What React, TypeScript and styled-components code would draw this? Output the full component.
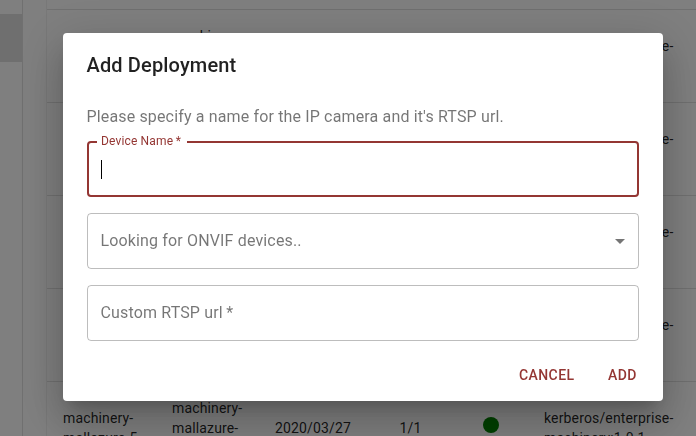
import React from "react";
import styled, { createGlobalStyle } from "styled-components";

const GlobalStyle = createGlobalStyle`
  *, *::before, *::after { box-sizing: border-box; }
  body {
    margin: 0;
    overflow: hidden;
    font-family: Roboto, "Liberation Sans", sans-serif;
    color: rgba(0, 0, 0, 0.87);
    -webkit-font-smoothing: antialiased;
  }
`;

const ACCENT = "#943633";

const Page = styled.div`
  display: flex;
  height: 100vh;
  overflow: hidden;
  background: #fff;
`;

const Sidebar = styled.nav`
  flex: none;
  width: 23px;
  padding-top: 14px;
  border-right: 1px solid #e0e0e0;
`;

const ActiveItem = styled.div`
  height: 48px;
  background: #dedede;
`;

const Main = styled.main`
  flex: 1;
  min-width: 0;
  padding-left: 23px;
`;

const Paper = styled.section`
  width: 760px;
  border-left: 1px solid #f0f0f0;
`;

const TableHead = styled.div`
  height: 10px;
  border-bottom: 1px solid #e0e0e0;
`;

const Row = styled.div`
  display: grid;
  grid-template-columns: 109px 103px 124.6px 83.4px 61px 1fr;
  align-items: center;
  height: 93px;
  border-bottom: 1px solid #e0e0e0;
`;

const Cell = styled.div`
  padding: 16px;
  font-size: 14px;
  line-height: 20px;
  letter-spacing: 0.01071em;
  white-space: pre-line;
`;

const StatusDot = styled.span`
  display: block;
  width: 16px;
  height: 16px;
  margin-top: -6px;
  border-radius: 50%;
  background: #008000;
`;

const Backdrop = styled.div`
  position: fixed;
  inset: 0;
  display: flex;
  align-items: flex-start;
  justify-content: center;
  padding: 33px 0 0 30px;
  background: rgba(0, 0, 0, 0.5);
`;

const Dialog = styled.div`
  width: 600px;
  height: 368px;
  border-radius: 4px;
  background: #fff;
  box-shadow: 0 11px 15px -7px rgba(0, 0, 0, 0.2),
    0 24px 38px 3px rgba(0, 0, 0, 0.14), 0 9px 46px 8px rgba(0, 0, 0, 0.12);
`;

const Title = styled.h2`
  margin: 0;
  padding: 16px 24px 16px 23.5px;
  font-size: 20px;
  font-weight: 500;
  line-height: 32px;
  letter-spacing: 0.0075em;
`;

const Content = styled.div`
  padding: 8px 24px;
`;

const Description = styled.p`
  margin: 0 0 12px -0.5px;
  font-size: 16px;
  line-height: 24px;
  letter-spacing: 0.00938em;
  color: rgba(0, 0, 0, 0.54);
`;

const Fields = styled.div`
  display: grid;
  gap: 16px;
`;

const Field = styled.div<{ $focused?: boolean }>`
  position: relative;
  display: flex;
  align-items: center;
  justify-content: space-between;
  height: 56px;
  padding: 0 ${(p) => (p.$focused ? "12px" : "13px 0 12.5px")};
  border: ${(p) => (p.$focused ? `2px solid ${ACCENT}` : "1px solid rgba(0, 0, 0, 0.26)")};
  border-radius: 4px;
  font-size: 16px;
  letter-spacing: 0.00938em;
  color: rgba(0, 0, 0, 0.54);
`;

const FieldText = styled.span`
  line-height: 20px;
`;

const FloatingLabel = styled.span`
  position: absolute;
  top: -9px;
  left: 8px;
  padding: 0 6px 0 4px;
  background: #fff;
  font-size: 12px;
  line-height: 14px;
  color: ${ACCENT};
`;

const Caret = styled.span`
  width: 1px;
  height: 19px;
  background: #000;
`;

const Arrow = styled.svg`
  width: 24px;
  height: 24px;
  margin-right: -7px;
  fill: rgba(0, 0, 0, 0.54);
`;

const Actions = styled.div`
  display: flex;
  justify-content: flex-end;
  gap: 8px;
  padding: 8px 8.6px 8px 8px;
`;

const TextButton = styled.button`
  min-width: 64px;
  height: 36px;
  padding: 6px 8px;
  border: 0;
  background: none;
  font: 500 14px/24px Roboto, "Liberation Sans", sans-serif;
  letter-spacing: 0.02857em;
  text-transform: uppercase;
  color: ${ACCENT};
`;

const rows = [1, 2, 3, 4, 5];

export default function App() {
  return (
    <>
      <GlobalStyle />
      <Page>
        <Sidebar>
          <ActiveItem />
        </Sidebar>
        <Main>
          <Paper>
            <TableHead />
            {rows.map((n) => (
              <Row key={n}>
                <Cell>{`machinery-\nmallazure-${n}`}</Cell>
                <Cell>{`machinery-\nmallazure-\n${n}`}</Cell>
                <Cell>2020/03/27</Cell>
                <Cell>1/1</Cell>
                <Cell>
                  <StatusDot />
                </Cell>
                <Cell>{"kerberos/enterprise-\nmachinery:1.0.1"}</Cell>
              </Row>
            ))}
          </Paper>
        </Main>
      </Page>
      <Backdrop>
        <Dialog role="dialog">
          <Title>Add Deployment</Title>
          <Content>
            <Description>
              Please specify a name for the IP camera and it's RTSP url.
            </Description>
            <Fields>
              <Field $focused>
                <FloatingLabel>Device Name&#8201;*</FloatingLabel>
                <Caret />
              </Field>
              <Field>
                <FieldText>Looking for ONVIF devices..</FieldText>
                <Arrow viewBox="0 0 24 24">
                  <path d="M7 10l5 5 5-5z" />
                </Arrow>
              </Field>
              <Field>
                <FieldText>Custom RTSP url&#8201;*</FieldText>
              </Field>
            </Fields>
          </Content>
          <Actions>
            <TextButton>Cancel</TextButton>
            <TextButton>Add</TextButton>
          </Actions>
        </Dialog>
      </Backdrop>
    </>
  );
}
